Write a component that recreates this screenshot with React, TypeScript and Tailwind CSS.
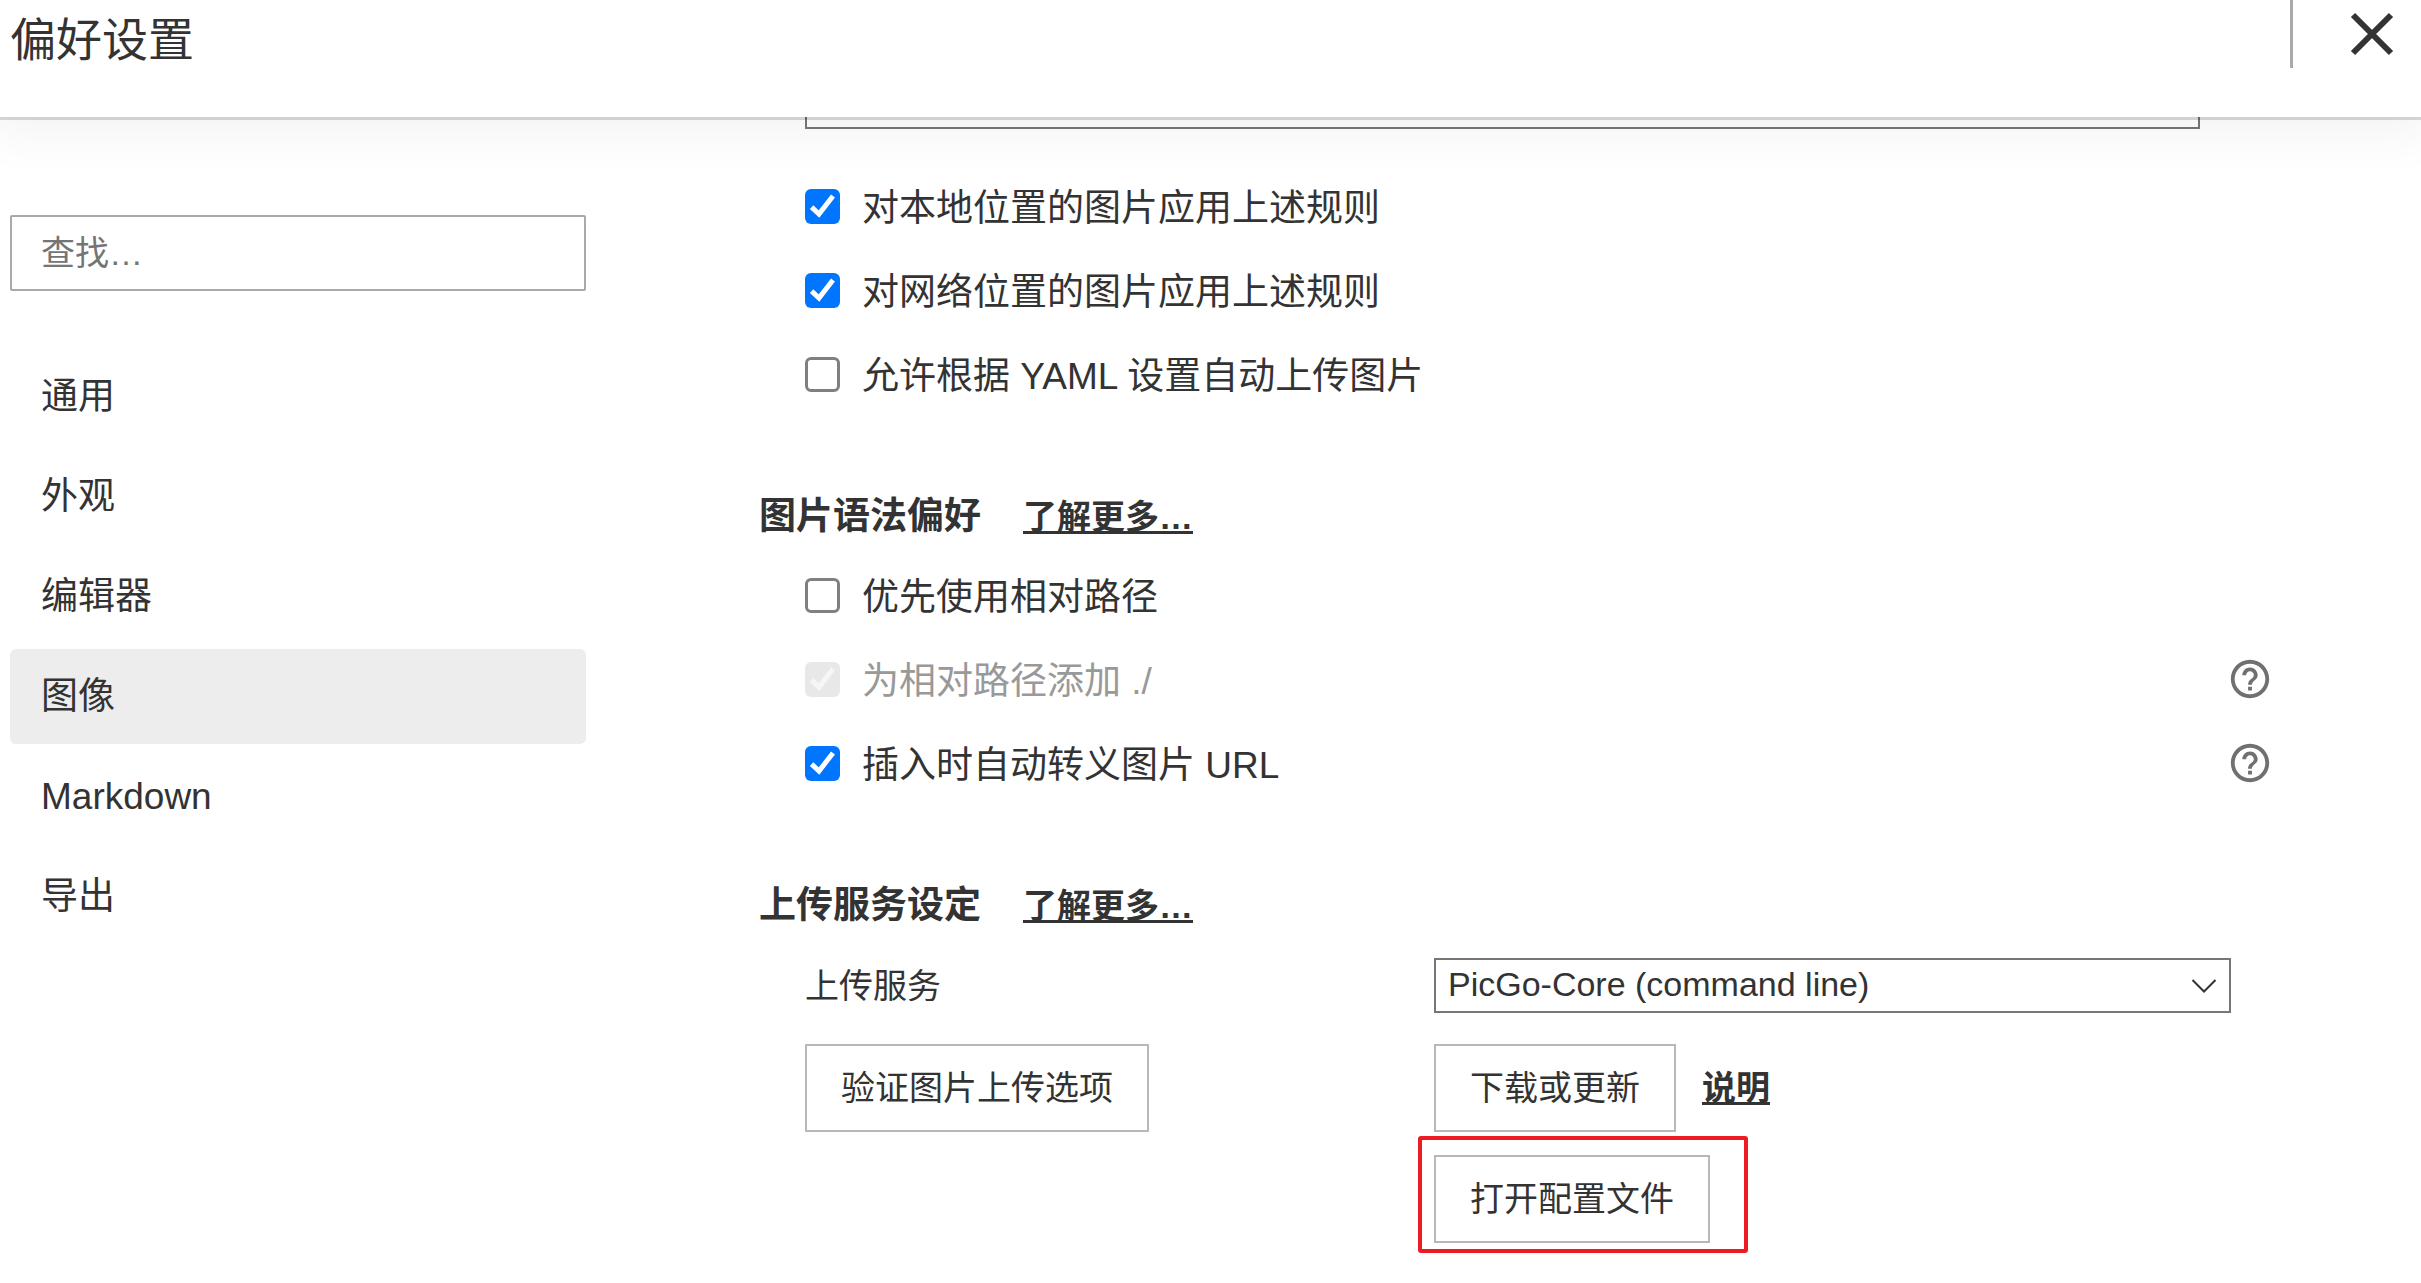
import { useState } from "react";
import { MdHelpOutline } from "react-icons/md";

const navItems = ["通用", "外观", "编辑器", "图像", "Markdown", "导出"];

const fontClass = "font-['Liberation_Sans','Noto_Sans_CJK_SC',sans-serif]";
const buttonClass = "h-[88px] border-2 border-[#b8b8b8] bg-white px-[34px] text-[34px] leading-[40px]";

type CheckRowProps = {
  label: string;
  checked?: boolean;
  disabled?: boolean;
  help?: boolean;
};

function CheckRow({ label, checked = false, disabled = false, help = false }: CheckRowProps) {
  const [value, setValue] = useState(checked);

  return (
    <div className="flex h-[84px] items-center justify-between pl-[46px]">
      <label className={`flex items-center gap-[22px] ${disabled ? "text-[#999999]" : ""}`}>
        <span className="relative h-[35px] w-[35px]">
          <input
            type="checkbox"
            checked={value}
            disabled={disabled}
            onChange={() => setValue(!value)}
            className="block h-[35px] w-[35px] appearance-none rounded-md border-[3px] border-[#808080] bg-white checked:border-0 checked:bg-[#0075ff] checked:disabled:bg-[#e8e8e8]"
          />
          {value && (
            <svg
              viewBox="0 0 35 35"
              className={`pointer-events-none absolute inset-0 ${disabled ? "text-[#f6f6f6]" : "text-white"}`}
              fill="none"
              stroke="currentColor"
              strokeWidth="5"
            >
              <path d="M6.600 18.200L14 25L28 7" />
            </svg>
          )}
        </span>
        <span className="pt-[6px]">{label}</span>
      </label>

      {help && (
        <button type="button" aria-label="帮助" className="text-[#707070]">
          <MdHelpOutline className="h-[46px] w-[46px]" />
        </button>
      )}
    </div>
  );
}

function SectionTitle({ title }: { title: string }) {
  return (
    <div className="mt-[59px] flex h-[78px] items-center gap-[42px] pt-[6px] font-bold">
      <h2>{title}</h2>
      <a href="#more" className="text-[34px] underline">
        了解更多…
      </a>
    </div>
  );
}

export default function App() {
  const [active, setActive] = useState("图像");

  return (
    <div className={`min-h-screen overflow-hidden bg-white text-[37px] leading-[44px] text-[#333333] ${fontClass}`}>
      <header className="relative z-10 flex h-[117px] items-start justify-between bg-white pl-[10px] shadow-[0_3px_0_rgba(0,0,0,0.15),0_0_56px_12px_rgba(0,0,0,0.06)]">
        <h1 className="pt-3 text-[46px] leading-[56px]">偏好设置</h1>

        <div className="flex h-[68px] items-center border-l-[3px] border-[#aaaaaa] pr-[27px] pl-[57px]">
          <button type="button" aria-label="关闭">
            <svg viewBox="0 0 44 44" className="h-11 w-11" stroke="currentColor" strokeWidth="6">
              <path d="M3 3L41 41M41 3L3 41" />
            </svg>
          </button>
        </div>
      </header>

      <div className="flex">
        <aside className="ml-[10px] w-[576px] shrink-0 pt-[98px]">
          <input
            type="text"
            aria-label="查找"
            placeholder="查找…"
            className="h-[76px] w-full rounded-[2px] border-2 border-[#a9a9a9] px-[29px] text-[34px] placeholder:text-[#757575]"
          />

          <nav className="mt-[58px] flex flex-col gap-[5px]">
            {navItems.map((item) => (
              <button
                key={item}
                type="button"
                onClick={() => setActive(item)}
                className={`h-[95px] rounded-md px-[31px] text-left ${item === active ? "bg-[#ededed]" : ""}`}
              >
                {item}
              </button>
            ))}
          </nav>
        </aside>

        <main className="ml-[173px] min-w-0 flex-1 pr-[148px] pb-[40px]">
          <div className="mb-[35px] pr-[73px] pl-[46px]">
            <textarea
              aria-label="规则"
              className="block h-3 w-full resize-none overflow-hidden border-2 border-t-0 border-[#767676]"
            />
          </div>

          <CheckRow label="对本地位置的图片应用上述规则" checked />
          <CheckRow label="对网络位置的图片应用上述规则" checked />
          <CheckRow label="允许根据 YAML 设置自动上传图片" />

          <SectionTitle title="图片语法偏好" />
          <CheckRow label="优先使用相对路径" />
          <CheckRow label="为相对路径添加 ./" checked disabled help />
          <CheckRow label="插入时自动转义图片 URL" checked help />

          <SectionTitle title="上传服务设定" />
          <div className="mt-4 grid grid-cols-[629px_1fr] pr-[42px] pl-[46px] text-[34px] leading-[40px]">
            <label htmlFor="service" className="self-center">
              上传服务
            </label>
            <div className="relative">
              <select
                id="service"
                className="block h-[55px] w-full appearance-none border-2 border-[#767676] bg-white px-3 pb-1"
              >
                <option>PicGo-Core (command line)</option>
              </select>
              <svg
                viewBox="0 0 26 16"
                className="pointer-events-none absolute top-5 right-[14px] h-4 w-[26px]"
                fill="none"
                stroke="currentColor"
                strokeWidth="2"
              >
                <path d="M1.500 2L13 13.500L24.500 2" />
              </svg>
            </div>

            <div className="mt-[31px]">
              <button type="button" className={buttonClass}>
                验证图片上传选项
              </button>
            </div>
            <div className="mt-[31px] flex flex-col items-start gap-[23px]">
              <div className="flex items-center gap-[26px]">
                <button type="button" className={buttonClass}>
                  下载或更新
                </button>
                <a href="#docs" className="font-bold underline">
                  说明
                </a>
              </div>
              <div className="relative">
                <button type="button" className={buttonClass}>
                  打开配置文件
                </button>
                <div className="pointer-events-none absolute -top-[19px] -right-[38px] -bottom-[10px] -left-4 rounded-[3px] border-4 border-[#ed1c24]" />
              </div>
            </div>
          </div>
        </main>
      </div>
    </div>
  );
}
